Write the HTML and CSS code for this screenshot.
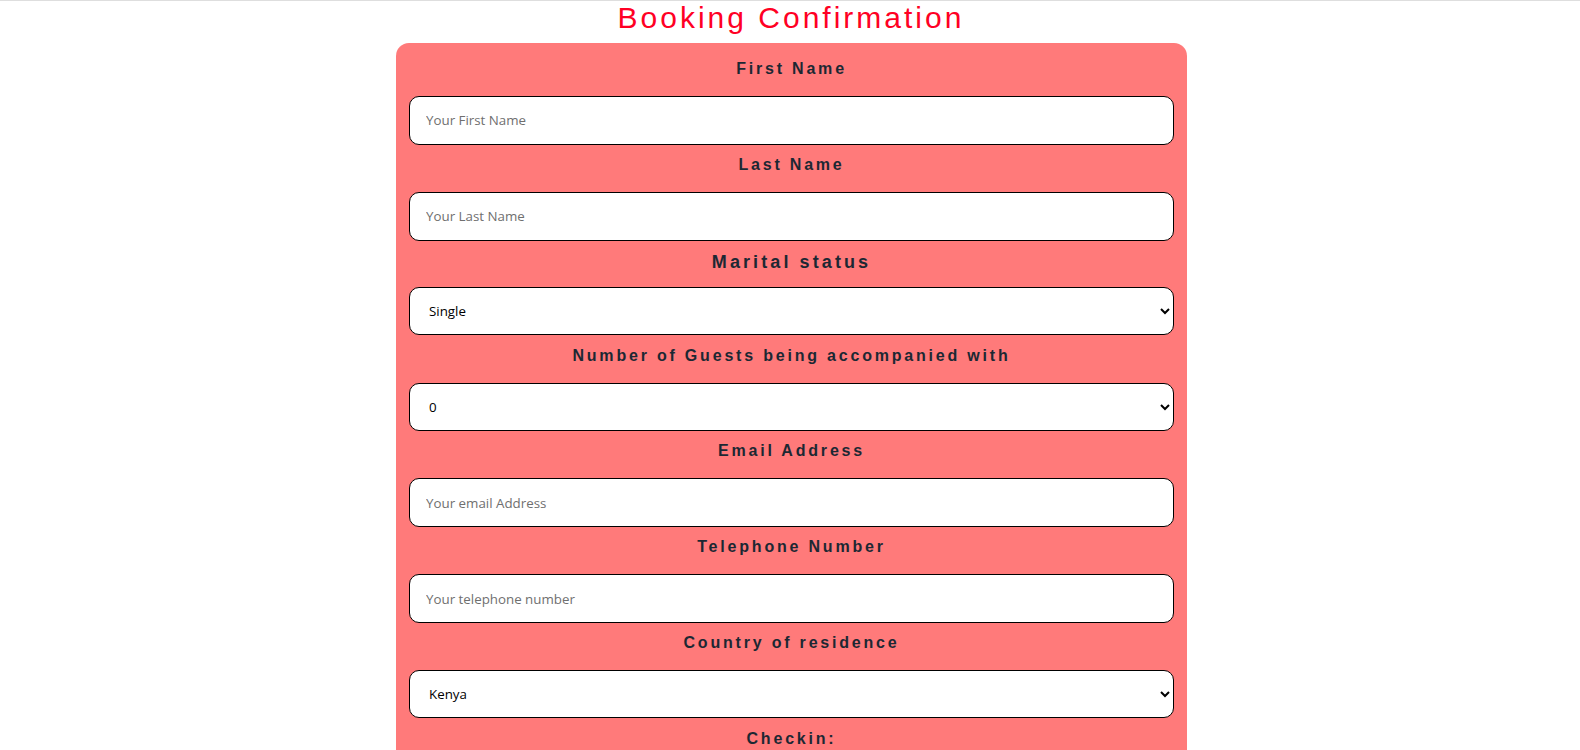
FILE: index.html
```html
<!DOCTYPE html>
<html lang="en">
<head>
<meta charset="utf-8">
<title>Booking Confirmation</title>
<link rel="stylesheet" href="styles.css">
</head>
<body>
<h1 class="title">Booking Confirmation</h1>
<form class="card">
  <label class="label" for="fname">First Name</label>
  <input class="field" id="fname" type="text" placeholder="Your First Name">

  <label class="label" for="lname">Last Name</label>
  <input class="field" id="lname" type="text" placeholder="Your Last Name">

  <label class="label label-big" for="marital">Marital status</label>
  <select class="field select" id="marital">
    <option>Single</option>
    <option>Married</option>
    <option>Divorced</option>
  </select>

  <label class="label" for="guests">Number of Guests being accompanied with</label>
  <select class="field select" id="guests">
    <option>0</option>
    <option>1</option>
    <option>2</option>
    <option>3</option>
  </select>

  <label class="label" for="email">Email Address</label>
  <input class="field" id="email" type="email" placeholder="Your email Address">

  <label class="label" for="tel">Telephone Number</label>
  <input class="field" id="tel" type="tel" placeholder="Your telephone number">

  <label class="label" for="country">Country of residence</label>
  <select class="field select" id="country">
    <option>Kenya</option>
    <option>Uganda</option>
    <option>Tanzania</option>
  </select>

  <label class="label" for="checkin">Checkin:</label>
  <input class="field" id="checkin" type="date">

  <label class="label" for="checkout">Checkout:</label>
  <input class="field" id="checkout" type="date">

  <button class="submit" type="submit">Submit</button>
</form>
</body>
</html>
```
FILE: styles.css
```css
html, body {
  margin: 0;
  padding: 0;
  background: #ffffff;
}

body {
  border-top: 1px solid #dedede;
  font-family: "Liberation Sans", Arial, sans-serif;
}

.title {
  margin: 0;
  padding-left: 2px;
  text-align: center;
  font-family: "Liberation Sans", Arial, sans-serif;
  font-weight: normal;
  font-size: 30px;
  letter-spacing: 3px;
  color: #ff0024;
}

.card {
  width: 791px;
  box-sizing: border-box;
  margin: 8px 0 0 calc(50% - 394px);
  padding: 16.5px 13px 30px;
  background: #ff7a7a;
  border-radius: 13px;
  display: flex;
  flex-direction: column;
}

.label {
  display: block;
  text-align: center;
  font-weight: bold;
  font-size: 16px;
  line-height: 18px;
  letter-spacing: 2.8px;
  color: #1c2833;
  margin: 0 0 18px;
}

.label-big {
  font-size: 18px;
  line-height: 20px;
  letter-spacing: 3.1px;
  margin-bottom: 15.5px;
}

.field {
  display: block;
  box-sizing: border-box;
  width: 100%;
  height: 49px;
  margin: 0 0 11px;
  padding: 0 16px;
  border: 1px solid #000;
  border-radius: 10px;
  background: #fff;
  font-family: "Open Sans", "Noto Sans", sans-serif;
  font-size: 13.33px;
  color: #000;
}

.field::placeholder {
  color: #6f6f6f;
}

.select {
  height: 48px;
  margin-bottom: 11.5px;
  padding-left: 15px;
}

.submit {
  align-self: center;
  margin-top: 10px;
  padding: 10px 30px;
  border: 1px solid #000;
  border-radius: 10px;
  background: #fff;
  font-size: 16px;
}
```
